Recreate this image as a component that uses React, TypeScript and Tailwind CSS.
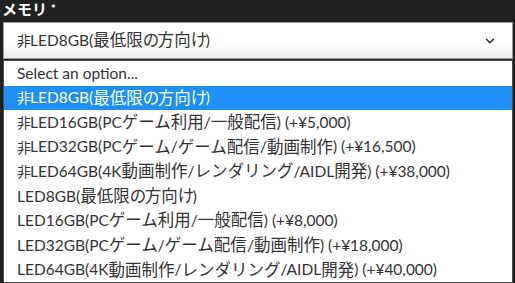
import { ChevronDown } from 'lucide-react';

const options = [
  { label: 'Select an option...', selected: false },
  { label: '非LED8GB(最低限の方向け)', selected: true },
  { label: '非LED16GB(PCゲーム利用/一般配信) (+¥5,000)', selected: false },
  { label: '非LED32GB(PCゲーム/ゲーム配信/動画制作) (+¥16,500)', selected: false },
  { label: '非LED64GB(4K動画制作/レンダリング/AIDL開発) (+¥38,000)', selected: false },
  { label: 'LED8GB(最低限の方向け)', selected: false },
  { label: 'LED16GB(PCゲーム利用/一般配信) (+¥8,000)', selected: false },
  { label: 'LED32GB(PCゲーム/ゲーム配信/動画制作) (+¥18,000)', selected: false },
  { label: 'LED64GB(4K動画制作/レンダリング/AIDL開発) (+¥40,000)', selected: false },
];

// Japanese runs render a bit larger than the latin text; hiragana and the leading 非 stay compact
const MixedText = ({ text }: { text: string }) => (
  <>
    {text.split(/(非|[\u3040-\u309f]|[\u30a0-\u30ff\u4e00-\u9fff]+)/).map((part, i) => {
      if (!part) return null;
      if (part === '非') {
        return (
          <span key={i} className="mr-[-1px] text-[14px]">
            {part}
          </span>
        );
      }
      if (/^[\u3040-\u309f]$/.test(part)) {
        return (
          <span key={i} className="text-[16.5px] tracking-[-1.5px]">
            {part}
          </span>
        );
      }
      if (/[\u30a0-\u30ff\u4e00-\u9fff]/.test(part)) {
        return (
          <span key={i} className="text-[16.5px]">
            {part}
          </span>
        );
      }
      return <span key={i}>{part}</span>;
    })}
  </>
);

const App = () => {
  return (
    <div
      className="w-[515px] h-[283px] overflow-hidden bg-[#1f2122]"
      style={{ fontFamily: 'Lato, "Noto Sans CJK JP", sans-serif' }}
    >
      {/* Field label */}
      <div className="h-[22px] pl-[2px] text-[15px] font-bold leading-[18px] text-white">
        メモリ <span className="text-[12px] align-top">*</span>
      </div>

      <div className="ml-[3px] mr-[2px]">
        {/* Select box */}
        <div className="flex h-[37px] items-center justify-between border border-[#9a9a9a] bg-gradient-to-b from-white from-60% to-[#ececec] pl-[13px] pr-[15px]">
          <span className="text-[15.5px] text-[#333]">
            <MixedText text="非LED8GB(最低限の方向け)" />
          </span>
          <ChevronDown className="h-3.5 w-3.5 text-[#333]" strokeWidth={2.75} />
        </div>

        {/* Open option list */}
        <div className="mt-[1px] border border-[#4a4a4a] bg-white">
          {options.map((opt) => (
            <div
              key={opt.label}
              className={`flex h-[24.6px] items-center pl-[13px] text-[15.5px] whitespace-nowrap ${
                opt.selected ? 'bg-[#1e8ff5] text-white' : 'text-[#333]'
              }`}
            >
              <MixedText text={opt.label} />
            </div>
          ))}
        </div>
      </div>
    </div>
  );
};

export default App;
